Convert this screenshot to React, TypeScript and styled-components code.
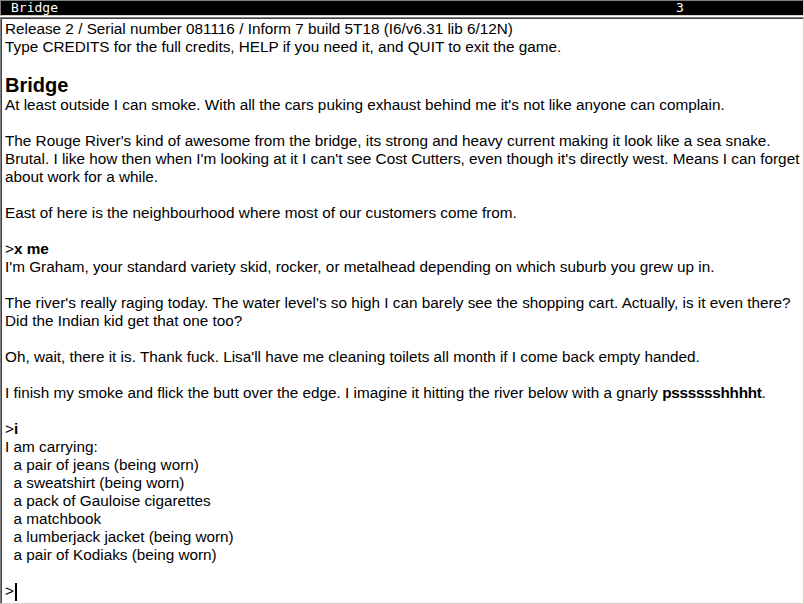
import React from "react";
import styled, { createGlobalStyle } from "styled-components";

const GlobalStyle = createGlobalStyle`
  html, body {
    margin: 0;
    padding: 0;
    background: #ffffff;
    overflow: hidden;
  }
`;

const Frame = styled.div`
  width: 804px;
  height: 604px;
  display: flex;
  flex-direction: column;
  background: #ffffff;
  box-sizing: border-box;
`;

const StatusBar = styled.div`
  flex: none;
  height: 14px;
  display: grid;
  grid-template-columns: 675px auto;
  background: #000000;
  color: #ffffff;
  border-top: 1px solid #808080;
  border-left: 1px solid #808080;
  border-right: 1px solid #d4d0c8;
  border-bottom: 1px solid #d4d0c8;
  margin-bottom: 1px;
  font-family: "DejaVu Sans Mono", "Liberation Mono", monospace;
  font-size: 13px;
  line-height: 14px;
  white-space: pre;
`;

const StatusCell = styled.span<{ $indent?: number }>`
  padding-left: ${(p) => p.$indent ?? 0}px;
`;

const Buffer = styled.div`
  flex: 1;
  min-height: 0;
  box-sizing: border-box;
  border-top: 1px solid #808080;
  border-left: 1px solid #808080;
  border-right: 1px solid #d4d0c8;
  border-bottom: 1px solid #d4d0c8;
  box-shadow: inset 1px 1px 0 #404040, inset -1px -1px 0 #ffffff;
  padding: 2px 4px 0 4px;
  font-family: "Liberation Sans", Arial, sans-serif;
  font-size: 15.3px;
  line-height: 18px;
  color: #000000;
  overflow: hidden;
`;

const Para = styled.p<{ $gap?: boolean }>`
  margin: 0 0 ${(p) => (p.$gap === false ? 0 : 18)}px 0;
  white-space: pre;
`;

const RoomTitle = styled.h1`
  margin: 0;
  font-size: 20px;
  line-height: 22px;
  font-weight: bold;
`;

const Input = styled.b`
  font-weight: bold;
`;

const Emph = styled.b`
  font-weight: bold;
  letter-spacing: -0.3px;
`;

const Cursor = styled.span`
  display: inline-block;
  width: 2px;
  height: 18px;
  margin-left: 1px;
  background: #000000;
  vertical-align: -5px;
`;

const Prompt: React.FC<{ cmd?: string }> = ({ cmd }) => (
  <Para $gap={false}>
    &gt;{cmd ? <Input>{cmd}</Input> : <Cursor />}
  </Para>
);

const inventory = [
  "a pair of jeans (being worn)",
  "a sweatshirt (being worn)",
  "a pack of Gauloise cigarettes",
  "a matchbook",
  "a lumberjack jacket (being worn)",
  "a pair of Kodiaks (being worn)",
];

export default function App() {
  return (
    <>
      <GlobalStyle />
      <Frame>
        <StatusBar>
          <StatusCell $indent={10}>Bridge</StatusCell>
          <StatusCell>3</StatusCell>
        </StatusBar>
        <Buffer>
          <Para>
            Release 2 / Serial number 081116 / Inform 7 build 5T18 (I6/v6.31 lib 6/12N)
            <br />
            Type CREDITS for the full credits, HELP if you need it, and QUIT to exit the game.
          </Para>
          <RoomTitle>Bridge</RoomTitle>
          <Para>
            At least outside I can smoke. With all the cars puking exhaust behind me it's not like anyone can complain.
          </Para>
          <Para>
            The Rouge River's kind of awesome from the bridge, its strong and heavy current making it look like a sea snake.
            <br />
            Brutal. I like how then when I'm looking at it I can't see Cost Cutters, even though it's directly west. Means I can forget
            <br />
            about work for a while.
          </Para>
          <Para>East of here is the neighbourhood where most of our customers come from.</Para>
          <Prompt cmd="x me" />
          <Para>
            I'm Graham, your standard variety skid, rocker, or metalhead depending on which suburb you grew up in.
          </Para>
          <Para>
            The river's really raging today. The water level's so high I can barely see the shopping cart. Actually, is it even there?
            <br />
            Did the Indian kid get that one too?
          </Para>
          <Para>
            Oh, wait, there it is. Thank fuck. Lisa'll have me cleaning toilets all month if I come back empty handed.
          </Para>
          <Para>
            I finish my smoke and flick the butt over the edge. I imagine it hitting the river below with a gnarly{" "}
            <Emph>psssssshhhht</Emph>.
          </Para>
          <Prompt cmd="i" />
          <Para>
            I am carrying:
            {inventory.map((item) => (
              <React.Fragment key={item}>
                <br />
                {"  " + item}
              </React.Fragment>
            ))}
          </Para>
          <Prompt />
        </Buffer>
      </Frame>
    </>
  );
}
